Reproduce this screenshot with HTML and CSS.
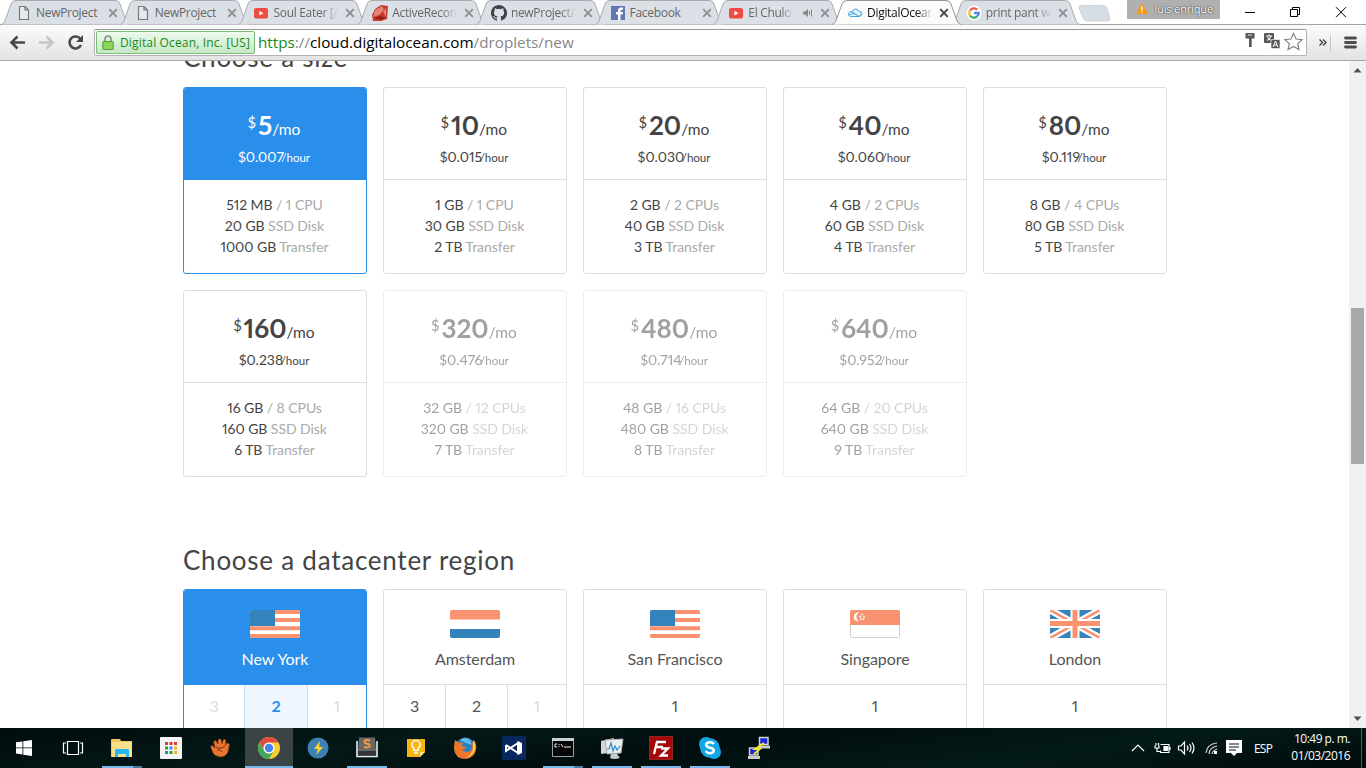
FILE: index.html
```html
<!DOCTYPE html>
<html lang="en">
<head>
<meta charset="utf-8">
<title>DigitalOcean</title>
<link rel="stylesheet" href="styles.css">
</head>
<body>
<svg class="defs" aria-hidden="true">
  <defs>
    <symbol id="tab" viewBox="0 0 131 25"><path d="M1 24.5C4 24 5 21 6 18L11 4Q12 .5 16 .5H115Q119 .5 120 4L125 18C126 21 127 24 130 24.5"/></symbol>
    <symbol id="x" viewBox="0 0 10 10"><path d="M1.2 1.2l7.6 7.6M8.800 1.200l-7.600 7.600" fill="none" stroke="currentColor" stroke-width="1.900"/></symbol>
    <symbol id="doc" viewBox="0 0 16 16"><path d="M3.500 1.500h5.500l3.500 3.500v9.500h-9zM9 1.500v3.500h3.500" fill="#e6eaee" stroke="#777" stroke-width="1.200"/></symbol>
    <symbol id="yt" viewBox="0 0 16 16"><rect x="1" y="3" width="14" height="10.500" rx="2" fill="#ee4b43"/><path d="M6.300 5.800l4.200 2.400-4.200 2.400z" fill="#fff"/></symbol>
    <symbol id="us" viewBox="0 0 50 28"><path fill="#fff" d="M0 0h50v28H0z"/><path d="M0 2H50M0 10H50M0 18.200H50M0 26H50" stroke="#f8926f" stroke-width="4"/><path fill="#3583bc" d="M0 0h25v16H0z"/></symbol>
  </defs>
</svg>

<div class="tabstrip">
  <div class="tabs">
    <div class="tab"><svg class="shape"><use href="#tab"/></svg><svg class="fav"><use href="#doc"/></svg><span class="label">NewProject</span><svg class="close"><use href="#x"/></svg></div>
    <div class="tab"><svg class="shape"><use href="#tab"/></svg><svg class="fav"><use href="#doc"/></svg><span class="label">NewProject</span><svg class="close"><use href="#x"/></svg></div>
    <div class="tab"><svg class="shape"><use href="#tab"/></svg><svg class="fav"><use href="#yt"/></svg><span class="label fade">Soul Eater [Au</span><svg class="close"><use href="#x"/></svg></div>
    <div class="tab"><svg class="shape"><use href="#tab"/></svg><svg class="fav" viewBox="0 0 16 16"><path d="M0 10L3 4l6-4 7 1-1 13-6 2H1z" fill="#c53830"/><path d="M3 5l7-4 2 4-5 5-6 2zM11 7l3-4v9z" fill="#e58478"/><path d="M2 13l6-2 6 2-5 2z" fill="#982118"/></svg><span class="label fade">ActiveRecord::</span><svg class="close"><use href="#x"/></svg></div>
    <div class="tab"><svg class="shape"><use href="#tab"/></svg><svg class="fav" viewBox="0 0 16 16"><path fill="#3e4246" d="M8 0C3.580 0 0 3.580 0 8c0 3.540 2.290 6.530 5.470 7.590.4.070.550-.17.550-.38v-1.490c-2.010.37-2.530-.49-2.690-.94-.09-.23-.48-.94-.82-1.130-.28-.15-.68-.52-.01-.53.630-.01 1.080.580 1.230.820.720 1.210 1.870.870 2.330.660.070-.52.280-.87.510-1.070-1.780-.2-3.640-.89-3.640-3.950 0-.87.310-1.590.820-2.150-.08-.2-.36-1.020.080-2.120 0 0 .670-.21 2.200.820a7.700 7.700 0 0 1 4 0c1.530-1.040 2.200-.82 2.200-.82.440 1.100.160 1.920.080 2.120.510.560.820 1.270.820 2.150 0 3.070-1.870 3.750-3.650 3.950.290.250.540.730.540 1.480v2.200c0 .210.150.460.550.380A8 8 0 0 0 8 0z"/></svg><span class="label fade">newProject/ap</span><svg class="close"><use href="#x"/></svg></div>
    <div class="tab"><svg class="shape"><use href="#tab"/></svg><svg class="fav" viewBox="0 0 16 16"><path fill="#6079b5" d="M1 1h14v14H1z"/><path fill="#fff" d="M8 15V9.500H6V7h2V5.500C8 3.500 9.200 2.500 11 2.500h2V5h-1.300c-.8 0-1.200.3-1.200 1v1H13l-.4 2.500h-2.100V15z"/></svg><span class="label">Facebook</span><svg class="close"><use href="#x"/></svg></div>
    <div class="tab"><svg class="shape"><use href="#tab"/></svg><svg class="fav"><use href="#yt"/></svg><span class="label fade short">El Chulo de</span><svg class="sound" viewBox="0 0 10 10"><path d="M0 3.500h2L5 1v8L2 6.500H0z" fill="#888"/><path d="M6.500 3v4M8.500 1.500v7" stroke="#888"/></svg><svg class="close"><use href="#x"/></svg></div>
    <div class="tab active"><svg class="shape"><use href="#tab"/></svg><svg class="fav" viewBox="0 0 16 16"><path d="M3.500 11.500Q1 11 1.500 8.500T5 7Q6 4 8.500 4T12 6.500q3 0 3 2t-3 3zM2 10q4-3 8 0t4-1M5 7q2 0 3 2" fill="#dff1fb" stroke="#4ba6dd"/></svg><span class="label fade">DigitalOcean</span><svg class="close"><use href="#x"/></svg></div>
    <div class="tab last"><svg class="shape"><use href="#tab"/></svg><svg class="fav" viewBox="0 0 16 16"><circle cx="8" cy="8" r="7.500" fill="#fff"/><g fill="none" stroke-width="2.300"><path d="M4 5.500A4.700 4.700 0 0 1 11.200 4.600" stroke="#e9594d"/><path d="M4 5.500A4.700 4.700 0 0 0 4 10.500" stroke="#f7c233"/><path d="M4 10.500A4.700 4.700 0 0 0 11 11.700" stroke="#4cae64"/><path d="M11 11.700Q12.700 10.200 12.700 8H8" stroke="#5089ee"/></g></svg><span class="label fade">print pant wo</span><svg class="close"><use href="#x"/></svg></div>
  </div>
  <svg class="newtab" viewBox="0 0 33 17"><path d="M3 .5H25Q28 .5 29 3L32 13Q32.500 16 29 16H9Q6 16 5 13L1 3Q.5.5 3 .5z" fill="#d6dde5" stroke="#d3d6d9"/></svg>
  <div class="user"><svg viewBox="0 0 12 11"><path d="M6 0l6 11H0z" fill="#f49b16"/><path d="M6 3.500v4M6 8.500v1.300" stroke="#fff" stroke-width="1.200"/></svg><span>luis enrique</span></div>
  <svg class="winctl" viewBox="0 0 106 24" fill="none" stroke="#000"><path d="M0 12.500h10M45.500 9.500h7v7h-7zM47.500 9V7.500h7v7H53M91 7.200l10 10M101 7.200l-10 10"/></svg>
</div>

<div class="toolbar">
  <svg class="nav" viewBox="0 0 94 36" fill="none" stroke-width="2.600"><path d="M25 17.500H12M17.500 11.500l-6 6 6 6" stroke="#484848"/><path d="M39 17.500H52M46.500 11.500l6 6-6 6" stroke="#c6c6c6"/><path d="M80.500 14A6 6 0 1 0 81 20" stroke="#484848"/><path d="M83 10v7h-7z" fill="#484848" stroke="none"/></svg>
  <div class="omnibox">
    <div class="cert"><svg viewBox="0 0 12 15"><path d="M3 7V4.200a3 3 0 0 1 6 0V7" fill="none" stroke="#8c9b88" stroke-width="1.800"/><rect x=".8" y="6.500" width="10.400" height="8" rx=".5" fill="#8bd755" stroke="#539c38"/></svg><span>Digital Ocean, Inc. [US]</span></div>
    <div class="url"><span class="scheme">https</span><span class="dim">://</span>cloud.digitalocean.com<span class="dim">/droplets/new</span></div>
    <svg class="boxicons" viewBox="0 0 62 24"><path d="M2.500 3h9v5.500H8.700V17H6V8.500H2.500z" fill="#585858"/><path d="M5 5h4" stroke="#ddd"/><rect x="21" y="3" width="10" height="10" rx="1" fill="#585858"/><path d="M23 6h6M26 4.500V6M24 10.500q3-1 4-4.500M24.500 7q1 2.500 3.500 3.500" fill="none" stroke="#fff"/><rect x="28" y="9.500" width="9" height="9" rx="1" fill="#585858" stroke="#fff" stroke-width=".6"/><path d="M30 17l2.500-6 2.500 6M31 15h3" fill="none" stroke="#fff"/><path d="M50.500 3.500l2.600 5.500 6 .6-4.400 4 1.300 5.900-5.500-3-5.500 3 1.300-5.900-4.400-4 6-.6z" fill="#fff" stroke="#858585" stroke-width="1.200"/></svg>
  </div>
  <svg class="menu" viewBox="0 0 59 36"><path d="M12.500 14.500l3 3-3 3M16 14.500l3 3-3 3" fill="none" stroke="#444" stroke-width="1.400"/><path d="M23.500 10v17" stroke="#c4c4c4"/><path d="M38.500 13h10M38.500 17.500h10M38.500 22h10" stroke="#4c4c4c" stroke-width="2.800" stroke-linecap="round"/></svg>
</div>

<div class="viewport">
  <main class="page">
    <h2 class="title">Choose a size</h2>
    <div class="grid">
      <div class="card selected"><div class="price"><div class="month"><sup>$</sup><b>5</b><i>/mo</i></div><div class="hour">$0.007<small>/hour</small></div></div><ul class="specs"><li>512 MB <span>/ 1 CPU</span></li><li>20 GB <span>SSD Disk</span></li><li>1000 GB <span>Transfer</span></li></ul></div>
      <div class="card"><div class="price"><div class="month"><sup>$</sup><b>10</b><i>/mo</i></div><div class="hour">$0.015<small>/hour</small></div></div><ul class="specs"><li>1 GB <span>/ 1 CPU</span></li><li>30 GB <span>SSD Disk</span></li><li>2 TB <span>Transfer</span></li></ul></div>
      <div class="card"><div class="price"><div class="month"><sup>$</sup><b>20</b><i>/mo</i></div><div class="hour">$0.030<small>/hour</small></div></div><ul class="specs"><li>2 GB <span>/ 2 CPUs</span></li><li>40 GB <span>SSD Disk</span></li><li>3 TB <span>Transfer</span></li></ul></div>
      <div class="card"><div class="price"><div class="month"><sup>$</sup><b>40</b><i>/mo</i></div><div class="hour">$0.060<small>/hour</small></div></div><ul class="specs"><li>4 GB <span>/ 2 CPUs</span></li><li>60 GB <span>SSD Disk</span></li><li>4 TB <span>Transfer</span></li></ul></div>
      <div class="card"><div class="price"><div class="month"><sup>$</sup><b>80</b><i>/mo</i></div><div class="hour">$0.119<small>/hour</small></div></div><ul class="specs"><li>8 GB <span>/ 4 CPUs</span></li><li>80 GB <span>SSD Disk</span></li><li>5 TB <span>Transfer</span></li></ul></div>
      <div class="card"><div class="price"><div class="month"><sup>$</sup><b>160</b><i>/mo</i></div><div class="hour">$0.238<small>/hour</small></div></div><ul class="specs"><li>16 GB <span>/ 8 CPUs</span></li><li>160 GB <span>SSD Disk</span></li><li>6 TB <span>Transfer</span></li></ul></div>
      <div class="card disabled"><div class="price"><div class="month"><sup>$</sup><b>320</b><i>/mo</i></div><div class="hour">$0.476<small>/hour</small></div></div><ul class="specs"><li>32 GB <span>/ 12 CPUs</span></li><li>320 GB <span>SSD Disk</span></li><li>7 TB <span>Transfer</span></li></ul></div>
      <div class="card disabled"><div class="price"><div class="month"><sup>$</sup><b>480</b><i>/mo</i></div><div class="hour">$0.714<small>/hour</small></div></div><ul class="specs"><li>48 GB <span>/ 16 CPUs</span></li><li>480 GB <span>SSD Disk</span></li><li>8 TB <span>Transfer</span></li></ul></div>
      <div class="card disabled"><div class="price"><div class="month"><sup>$</sup><b>640</b><i>/mo</i></div><div class="hour">$0.952<small>/hour</small></div></div><ul class="specs"><li>64 GB <span>/ 20 CPUs</span></li><li>640 GB <span>SSD Disk</span></li><li>9 TB <span>Transfer</span></li></ul></div>
    </div>
    <h2 class="title regions-title">Choose a datacenter region</h2>
    <div class="grid">
      <div class="card region selected"><div class="place"><svg class="flag"><use href="#us"/></svg><span>New York</span></div><div class="dcs three"><span class="off">3</span><span class="on">2</span><span class="off">1</span></div></div>
      <div class="card region"><div class="place"><svg class="flag" viewBox="0 0 50 28"><path fill="#fff" d="M0 0h50v28H0z"/><path fill="#f8926f" d="M0 0h50v9.500H0z"/><path fill="#3583bc" d="M0 19h50v9H0z"/></svg><span>Amsterdam</span></div><div class="dcs three"><span>3</span><span>2</span><span class="off">1</span></div></div>
      <div class="card region"><div class="place"><svg class="flag"><use href="#us"/></svg><span>San Francisco</span></div><div class="dcs"><span>1</span></div></div>
      <div class="card region"><div class="place"><svg class="flag" viewBox="0 0 50 28"><rect x=".5" y=".5" width="49" height="27" rx="1.500" fill="#fff" stroke="#cfcfcf"/><path fill="#f8926f" d="M0 0h50v15H0z"/><path d="M9.500 2.300a4.700 4.700 0 1 0 0 9.200 5 5 0 0 1 0-9.200z" fill="#fff"/><g fill="#fff"><circle cx="12" cy="4.300" r=".9"/><circle cx="10.300" cy="6.500" r=".9"/><circle cx="14" cy="6.500" r=".9"/><circle cx="11" cy="9" r=".9"/><circle cx="13.500" cy="9" r=".9"/></g></svg><span>Singapore</span></div><div class="dcs"><span>1</span></div></div>
      <div class="card region"><div class="place"><svg class="flag" viewBox="0 0 50 28"><path fill="#3583bc" d="M0 0h50v28H0z"/><path d="M0 0l50 28M50 0L0 28" stroke="#fff" stroke-width="7"/><path d="M0 0l50 28M50 0L0 28" stroke="#f8926f" stroke-width="2.500"/><path d="M25 0v28M0 13.500h50" stroke="#fff" stroke-width="9"/><path d="M25 0v28M0 13.500h50" stroke="#f8926f" stroke-width="5"/></svg><span>London</span></div><div class="dcs"><span>1</span></div></div>
    </div>
  </main>
  <div class="scrollbar"><svg viewBox="0 0 17 17"><path d="M8.500 7l4 4.500h-8z" fill="#505050"/></svg><div class="thumb"></div><svg class="down" viewBox="0 0 17 17"><path d="M8.500 10l-4-4.500h8z" fill="#505050"/></svg></div>
</div>

<div class="taskbar">
  <div class="apps">
    <div class="app"><svg viewBox="0 0 24 24" fill="#fff"><path d="M4 6.300l6.500-.9v6.100H4zM11.300 5.300L20 4v7.500h-8.700zM4 12.300h6.500v6.200L4 17.600zM11.300 12.300H20V20l-8.700-1.300z"/></svg></div>
    <div class="app"><svg viewBox="0 0 24 24" fill="none" stroke="#fff" stroke-width="1.200"><path d="M6.500 5.500h11v13h-11zM5 7H2.500v10H5M19 7h2.500v10H19"/></svg></div>
    <div class="app open multi"><svg viewBox="0 0 24 24"><path d="M1 4q0-1 1-1h8l1 2h11v16H1z" fill="#f0c95c"/><path d="M2 6h20v15H2z" fill="#fbe08a"/><path d="M5 21v-7q0-1 1-1h12q1 0 1 1v7h-3v-3H8v3z" fill="#27b8f0"/></svg></div>
    <div class="app"><svg viewBox="0 0 24 24"><rect x="1" y="1" width="22" height="22" rx="1" fill="#f4f4f4"/><path d="M6 6h3v3H6zM10.500 6h3v3h-3zM15 6h3v3h-3z" fill="#e03c31"/><path d="M6 10.500h3v3H6zM6 15h3v3H6zM10.500 15h3v3h-3z" fill="#26a05a"/><path d="M10.500 10.500h3v3h-3z" fill="#3b8be8"/><path d="M15 10.500h3v3h-3zM15 15h3v3h-3z" fill="#f4b824"/></svg></div>
    <div class="app"><svg viewBox="0 0 24 24"><path d="M2.500 10.500q1-2 3 0l1.500 1.500L5.500 6q.5-2.500 2.800-1L10 8V4q1.500-2.500 3.300 0L14 7.500 15 4q2-1.500 3 .5L17.500 9l1.500-2q2.500-.5 2.500 2L20 16q-2 5-8 5-6-1-7.500-5z" fill="#e77631" stroke="#6b2a12" stroke-width=".7"/><path d="M8 11q4 3 9-1M9 14q3-1 5 2" fill="none" stroke="#7b3215"/></svg></div>
    <div class="app current"><svg viewBox="0 0 24 24"><circle cx="12" cy="12" r="11" fill="#fbcd35"/><path d="M2.500 6.500A11 11 0 0 1 21.500 6.500H12A5.500 5.500 0 0 0 7.300 14.800z" fill="#df4b40"/><path d="M2.500 6.500A11 11 0 0 0 12 23l4.800-8.300a5.500 5.500 0 0 1-9.600 0z" fill="#3fa75b"/><circle cx="12" cy="12" r="5.500" fill="#fff"/><circle cx="12" cy="12" r="4.200" fill="#4285ee"/></svg></div>
    <div class="app"><svg viewBox="0 0 24 24"><circle cx="12" cy="12" r="10.500" fill="#3f80b4"/><path d="M14 5l-6 8h4l-2 6 7-8h-4z" fill="#ffd72c"/></svg></div>
    <div class="app open"><svg viewBox="0 0 24 24"><path d="M2 5v15.500h20V5" fill="none" stroke="#eee" stroke-width="1.600"/><path d="M4 1.500h16L21 15H3z" fill="#686868"/><path d="M3 15h18v4H3z" fill="#353535"/><path d="M15 4.500q-5-1.500-5.500 1-.3 1.800 2.700 2.200 3.200.4 2.500 2.800-1.200 1.800-5.500.5" stroke="#f79b3c" stroke-width="1.900" fill="none"/></svg></div>
    <div class="app"><svg viewBox="0 0 24 24"><path d="M3 3h18v13l-5 5H3z" fill="#f6b50d"/><path d="M16 21v-5h5z" fill="#ffe08b"/><path d="M10 14.500v-2a4.200 4.200 0 1 1 4 0v2zM10 17h4" fill="none" stroke="#fff" stroke-width="1.500"/></svg></div>
    <div class="app"><svg viewBox="0 0 24 24"><circle cx="12.500" cy="11.500" r="10" fill="#2a7fc0"/><path d="M7 4q5-4 10 0l2 5-6-2z" fill="#64b9e6"/><path d="M2 4q2 1 4 3 2-1 4 0-2 2 0 3.500l3 .5q-1 3-4 2.500 3 4 8 1.500 3-2 2-8 2 1 2-3 3 4 2 10-2 8-10 9Q2 23 1 13q0-5 1-9z" fill="#ed772a"/><path d="M20 4q4 6 1 12-3 5-8 6 6-4 7-9z" fill="#ffd04b"/></svg></div>
    <div class="app"><svg viewBox="0 0 24 24"><path fill="#08285d" d="M0 0h24v24H0z"/><path d="M4 9v6l12-8v10L4 9M4 15l5-3.500" fill="none" stroke="#fff" stroke-width="2"/><path d="M15.500 5l4.500 2v10l-4.500 2z" fill="#fff"/></svg></div>
    <div class="app open multi"><svg viewBox="0 0 24 24"><path fill="#050505" stroke="#9aa3aa" d="M1.500 3.500h21v17h-21z"/><path fill="#c9d1d5" d="M1 2h22v3H1z"/><path d="M4 8h2M4 8v3h2M8 8v1M8 10v1M10 8l2 3M13 11h7" stroke="#eee" fill="none"/></svg></div>
    <div class="app open"><svg viewBox="0 0 24 24"><path d="M1 5l13-3v14L1 18z" fill="#d3d7d8"/><path d="M5 4l18-1-2 14-14 1z" fill="#ebeeee" stroke="#a7acad"/><path d="M7 13h2l2-6 2 8 2-5 2 4 3-4" fill="none" stroke="#3489c8" stroke-width="1.200"/><path d="M11 18h6l3 4q-6 2-10 0z" fill="#c8cbcc"/></svg></div>
    <div class="app open"><svg viewBox="0 0 24 24"><path fill="#a50808" stroke="#d03a34" stroke-dasharray="1 1" d="M.5.5h23v23H.5z"/><path d="M5 18L8 6h9M7 11h7M12 12.500h7l-7 7h7" fill="none" stroke="#fff" stroke-width="2.300"/></svg></div>
    <div class="app open"><svg viewBox="0 0 24 24"><circle cx="8" cy="8" r="7" fill="#13a7e5"/><circle cx="16" cy="16" r="7" fill="#13a7e5"/><circle cx="12" cy="12" r="9.800" fill="#13a7e5"/><path d="M16 8q-1.500-2-4.500-1.800Q8 6.500 8.200 9q.3 2 3.800 2.700 3.800.7 3.800 2.800 0 2.500-3.800 2.800-3 0-4.300-2.300" fill="none" stroke="#fff" stroke-width="2.400"/></svg></div>
    <div class="app"><svg viewBox="0 0 24 24"><path d="M12.500 1.500h8.500v7h-8.500zM2.500 12h8.500v7H2.500z" fill="#1d22d8" stroke="#d3d3c8" stroke-width="1.500"/><path d="M11 9.500h12v3H11zM1 20h12v3H1z" fill="#ccccc2"/><path d="M17 7l-9 6 5 0-6 5" fill="none" stroke="#f3ec22" stroke-width="1.800"/></svg></div>
  </div>
  <svg class="tray" viewBox="0 0 120 40" fill="none" stroke="#fff" stroke-width="1.200"><path d="M6 23l6-6 6 6"/><path d="M34.500 16.500h8.500v8h-8.500v-2M44 19v3M29 17.500v2.500h4v-2.500M30 15v2.500M32.500 15v2.500M31 20.500v3h3"/><path d="M38 18.500h3.500v4H38z" fill="#fff"/><path d="M52.500 18h2.500l3.500-4v12L55 22h-2.500zM61 17.500q2 2.500 0 5M63.500 16q3 4 0 8M66 14.500q4 5.500 0 11"/><path d="M80 25q1-9 11-10M83 26q0-6 8-8M86 26q0-3 5-5" stroke="#ccc"/><path d="M88 23h3v3h-3z" fill="#fff" stroke="none"/><path d="M100 12h16v13h-5l-3 3-3-3h-5z" fill="#fff" stroke="none"/><path d="M103 16h10M103 19h10M103 22h7" stroke="#061414"/></svg>
  <span class="lang">ESP</span>
  <div class="clock"><div>10:49 p. m.</div><div>01/03/2016</div></div>
  <div class="peek"></div>
</div>
</body>
</html>
```
FILE: styles.css
```css
* { box-sizing: border-box; }
body { margin: 0; width: 1366px; height: 768px; overflow: hidden; display: flex; flex-direction: column; background: #fff; font-family: "Open Sans", "Noto Sans", sans-serif; }
.defs { position: absolute; width: 0; height: 0; }
svg { display: block; flex: none; }

.tabstrip { height: 25px; flex: none; display: flex; position: relative; z-index: 1; background: linear-gradient(#fff 24px, #a0a2a4 24px); padding-left: 6px; }
.tabs { display: flex; }
.tab { position: relative; width: 118.720px; height: 25px; padding-left: 10px; display: flex; align-items: center; color: #666; }
.tab > * { position: relative; }
.tab .shape { position: absolute; left: -6px; top: 0; width: 131px; height: 25px; fill: #dbe0e7; stroke: #a8abaf; }
.tab.active { z-index: 2; color: #111; }
.tab.active .shape { fill: #fbfbfb; stroke: #929496; }
.fav { width: 16px; height: 16px; }
.label { width: 66px; margin-left: 4px; height: 18px; line-height: 17px; font-size: 12px; letter-spacing: -.3px; white-space: nowrap; overflow: hidden; }
.label.fade { -webkit-mask-image: linear-gradient(90deg, #000 75%, transparent); mask-image: linear-gradient(90deg, #000 75%, transparent); }
.label.short { width: 45px; }
.sound { width: 10px; height: 10px; margin: 0 1px 0 10px; }
.close { width: 10px; height: 10px; margin-left: 6px; color: #8d8f92; }
.active .close { color: #444; }
.newtab { width: 33px; height: 17px; margin: 5px 0 0 4px; }
.user { display: flex; width: 93px; height: 19px; margin-left: 16px; padding: 0 0 2px 9px; align-items: center; gap: 6px; background: #b0b0b0; color: #fff; font-size: 11px; letter-spacing: -.15px; text-shadow: 0 0 1px #333, 0 0 2px #444; white-space: nowrap; }
.user svg { width: 12px; height: 11px; }
.winctl { width: 106px; height: 24px; margin-left: 25px; }

.toolbar { height: 36px; flex: none; display: flex; background: linear-gradient(#fbfbfb, #e3e3e3); border-bottom: 1px solid #a6a6a6; }
.nav { width: 94px; height: 36px; }
.omnibox { width: 1213px; height: 27px; margin-top: 4px; display: flex; align-items: center; background: #fff; border: 1px solid #b3b3b3; border-top-color: #999; border-radius: 2px; }
.cert { width: 159px; height: 23px; margin-left: 1px; padding-left: 5px; display: flex; align-items: center; gap: 6px; border: 1px solid #7cbc7c; border-radius: 2px; background: linear-gradient(#eefaee, #c5e8c5); color: #168b16; font-size: 12px; line-height: 17px; white-space: nowrap; letter-spacing: .15px; }
.cert svg { width: 12px; height: 15px; }
.cert span { padding-bottom: 1px; }
.url { flex: 1; margin-left: 3px; padding-bottom: 2px; font-size: 15.250px; line-height: 22px; color: #000; }
.scheme { color: #168b16; }
.dim { color: #888; }
.boxicons { width: 62px; height: 24px; margin: 0 1px 1px 0; }
.menu { width: 59px; height: 36px; }

.viewport { flex: 1; min-height: 0; display: flex; overflow: hidden; }
.page { width: 1349px; height: 667px; overflow: hidden; padding-left: 183px; font-family: Lato, sans-serif; color: #444; font-variant-numeric: proportional-nums; }
.title { margin: -20px 0 14px; height: 32px; font-size: 26px; line-height: 32px; font-weight: 400; letter-spacing: .75px; white-space: nowrap; }
.regions-title { margin: 67px 0 13px; }
.grid { display: grid; grid-template-columns: repeat(5, 184px); gap: 16px; }
.card { height: 187px; border: 1px solid #ddd; border-radius: 3px; overflow: hidden; text-align: center; }
.card.selected { border-color: #2a8eeb; }
.card.disabled { opacity: .5; }
.price { height: 92px; padding-top: 22px; border-bottom: 1px solid #ddd; white-space: nowrap; }
.selected .price, .selected .place { background: #2a8eeb; border-color: #2a8eeb; color: #fff; }
.month { display: flex; justify-content: center; align-items: baseline; height: 32px; line-height: 32px; padding-right: 2px; margin-top: -1px; }
.month sup { font-size: 14.500px; line-height: 20px; align-self: flex-start; padding-top: 4px; margin-right: 2px; }
.month b { font-size: 26px; }
.month i { font-size: 15.500px; font-style: normal; }
.hour { font-size: 14px; line-height: 20px; margin-top: 6px; padding-right: 2px; }
.hour small { font-size: 11.500px; margin-left: -2.500px; }
.specs { list-style: none; margin: 0; padding: 14px 1px 0 0; font-size: 14px; line-height: 21px; letter-spacing: -.05px; }
.specs span { color: #aaa; }
.place { height: 95px; padding-top: 20px; display: flex; flex-direction: column; align-items: center; border-bottom: 1px solid #ddd; font-size: 16px; line-height: 20px; color: #555; letter-spacing: -.05px; }
.flag { width: 50px; height: 28px; border-radius: 2px; margin-bottom: 11px; }
.dcs { display: flex; height: 90px; font-size: 16px; line-height: 42px; color: #555; }
.dcs span { flex: 1; }
.dcs span + span { border-left: 1px solid #ddd; }
.three span:first-child { flex: 0 0 61px; }
.three span:nth-child(2) { flex: 0 0 62px; }
.selected .three span:first-child { flex-basis: 60px; }
.selected .three span:nth-child(2) { flex-basis: 63px; }
.dcs .off { color: #ddd; }
.dcs .on { background: #eef6ff; color: #2a8eeb; font-weight: 700; }
.selected .dcs span + span { border-color: #c5e4fa; }
.scrollbar { width: 17px; display: flex; flex-direction: column; background: #f1f1f1; }
.scrollbar svg { width: 17px; height: 17px; }
.thumb { width: 13px; height: 156px; margin: 230px 0 0 2px; background: #a8a8a8; }
.scrollbar .down { margin-top: auto; }

.taskbar { height: 40px; flex: none; display: flex; align-items: center; background: linear-gradient(172deg, #010d0d, #031917 30%, #010e0e 50%, #031a18 75%, #010b0b); color: #fff; }
.apps { display: flex; width: 1126px; }
.app { width: 49px; height: 40px; padding-right: 2px; display: flex; justify-content: center; align-items: center; }
.app svg { width: 24px; height: 24px; }
.app.open { background: linear-gradient(#76b9ed, #76b9ed) 4px 38px / 40px 2px no-repeat; }
.app.multi { background: linear-gradient(90deg, #76b9ed 31px, #4b7ba5 31px) 4px 38px / 40px 2px no-repeat; }
.app.current { background: linear-gradient(#3b4444 38px, #76b9ed 38px) 0 0 / 48px 40px no-repeat; }
.tray { width: 120px; height: 40px; }
.lang { width: 45px; padding-left: 8px; font-size: 12px; letter-spacing: -.8px; }
.clock { width: 59px; margin-top: -2px; text-align: right; font-size: 12px; line-height: 17px; letter-spacing: -.5px; white-space: nowrap; }
.peek { width: 1px; height: 40px; margin-left: 11px; background: #4b5959; }
```
